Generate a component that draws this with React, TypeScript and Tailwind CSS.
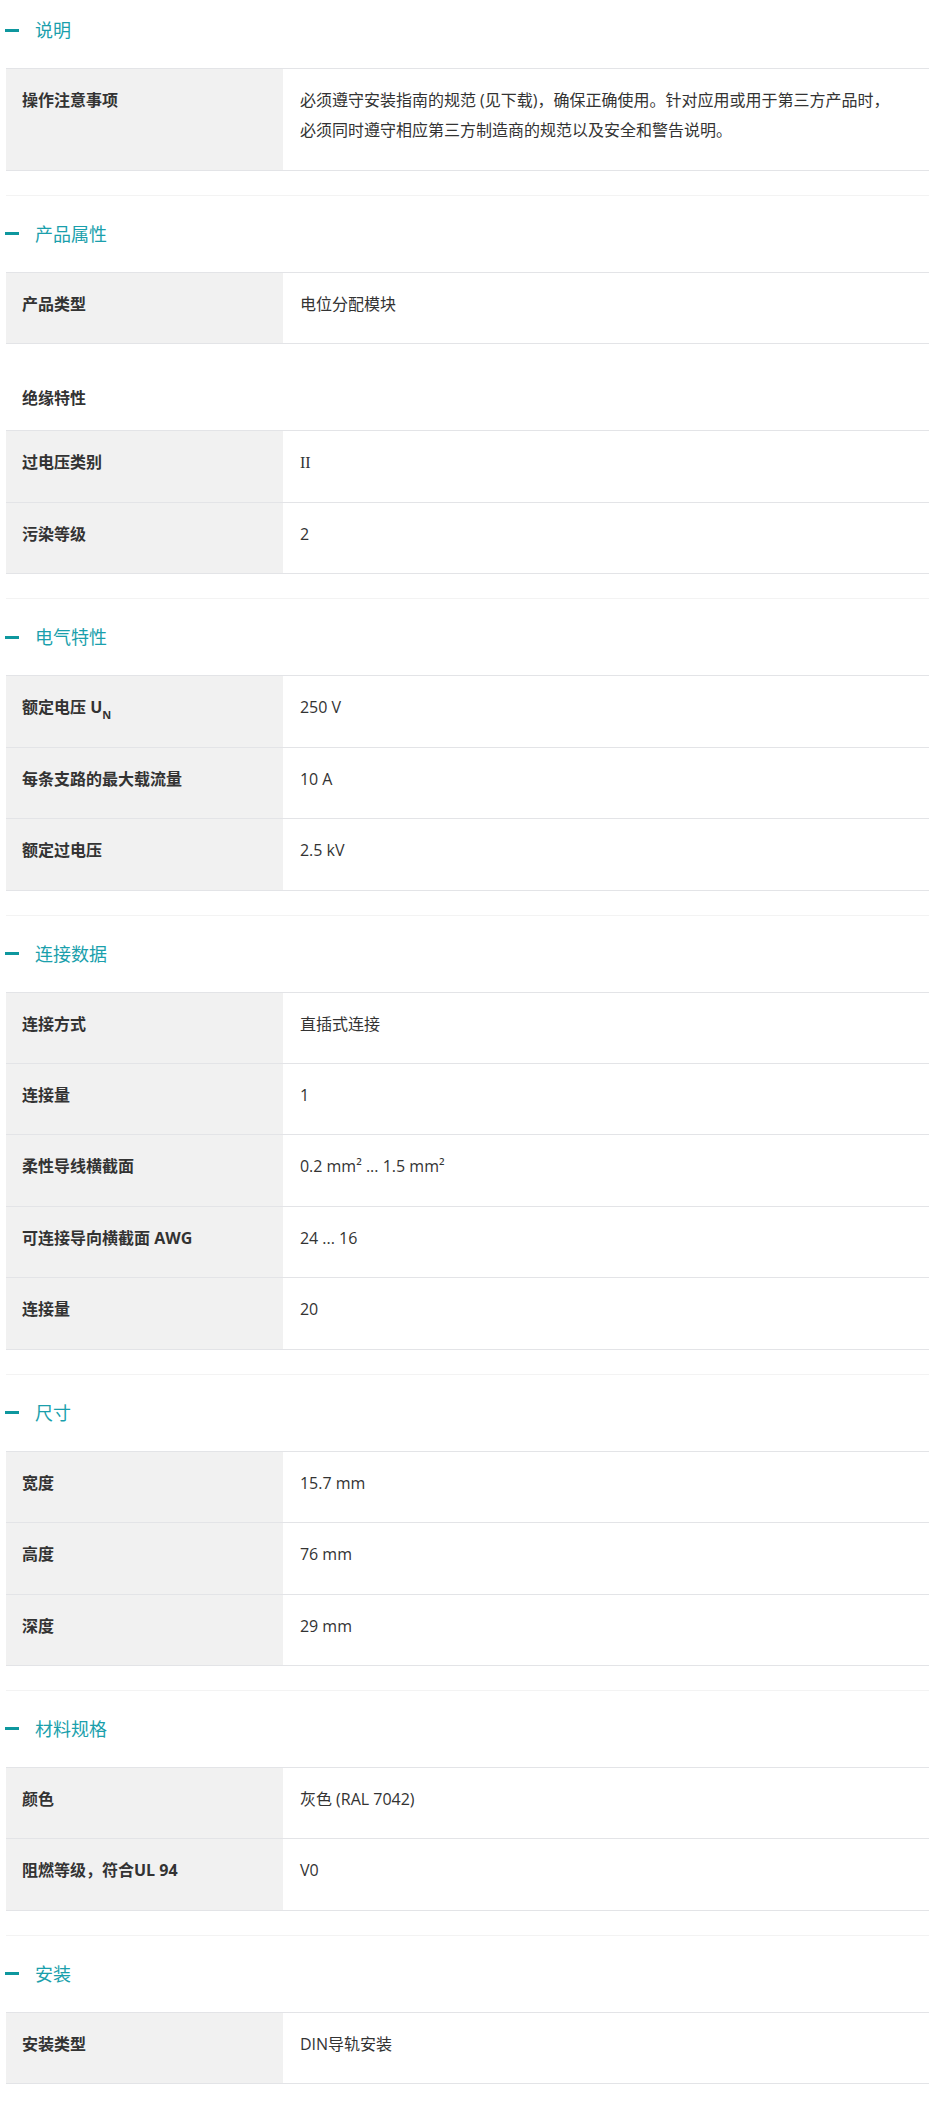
import type { ReactNode } from "react";

type Row = { label: ReactNode; value: ReactNode };
type Block = { sub?: string; rows: Row[] };
type Section = { title: string; blocks: Block[] };

const SECTIONS: Section[] = [
  {
    title: "说明",
    blocks: [
      {
        rows: [
          {
            label: "操作注意事项",
            value: (
              <>
                必须遵守安装指南的规范 (见下载)，确保正确使用。针对应用或用于第三方产品时，
                <br />
                必须同时遵守相应第三方制造商的规范以及安全和警告说明。
              </>
            ),
          },
        ],
      },
    ],
  },
  {
    title: "产品属性",
    blocks: [
      { rows: [{ label: "产品类型", value: "电位分配模块" }] },
      {
        sub: "绝缘特性",
        rows: [
          { label: "过电压类别", value: <span style={{ fontFamily: '"Liberation Serif", serif' }}>II</span> },
          { label: "污染等级", value: "2" },
        ],
      },
    ],
  },
  {
    title: "电气特性",
    blocks: [
      {
        rows: [
          {
            label: (
              <>
                额定电压 U<sub className="text-[11px] align-[-3px]">N</sub>
              </>
            ),
            value: "250 V",
          },
          { label: "每条支路的最大载流量", value: "10 A" },
          { label: "额定过电压", value: "2.5 kV" },
        ],
      },
    ],
  },
  {
    title: "连接数据",
    blocks: [
      {
        rows: [
          { label: "连接方式", value: "直插式连接" },
          { label: "连接量", value: "1" },
          { label: "柔性导线横截面", value: "0.2 mm² ... 1.5 mm²" },
          { label: "可连接导向横截面 AWG", value: "24 ... 16" },
          { label: "连接量", value: "20" },
        ],
      },
    ],
  },
  {
    title: "尺寸",
    blocks: [
      {
        rows: [
          { label: "宽度", value: "15.7 mm" },
          { label: "高度", value: "76 mm" },
          { label: "深度", value: "29 mm" },
        ],
      },
    ],
  },
  {
    title: "材料规格",
    blocks: [
      {
        rows: [
          { label: "颜色", value: "灰色 (RAL 7042)" },
          { label: "阻燃等级，符合UL 94", value: "V0" },
        ],
      },
    ],
  },
  {
    title: "安装",
    blocks: [{ rows: [{ label: "安装类型", value: "DIN导轨安装" }] }],
  },
];

function SpecTable({ rows }: { rows: Row[] }) {
  return (
    <div className="border-t border-[#e3e4e7]">
      {rows.map((r, i) => (
        <div key={i} className="flex border-b border-[#e3e4e7]">
          <div className="w-[30%] shrink-0 bg-[#f1f1f1] px-4 pt-4 pb-6 font-bold text-[#333]">{r.label}</div>
          <div className="flex-1 pl-[17px] pr-4 pt-4 pb-6 text-[#333]">{r.value}</div>
        </div>
      ))}
    </div>
  );
}

export default function App() {
  return (
    <main
      className="min-h-screen bg-white pl-[6px] pr-[5px] text-[16px] leading-[30.4px]"
      style={{ fontFamily: '"Open Sans", "Noto Sans CJK SC", sans-serif' }}
    >
      {SECTIONS.map((s, i) => (
        <section key={s.title} className={i === 0 ? "pt-[18px] pb-6" : "border-t border-[#f3f3f3] pt-[26px] pb-6"}>
          <h2 className="mb-[26px] -ml-px flex items-center gap-4 text-[18px] leading-6 font-normal text-[#1a9fac]">
            <span className="h-[3px] w-[14px] bg-[#0e979e]" />
            {s.title}
          </h2>
          {s.blocks.map((b, j) => (
            <div key={j}>
              {b.sub && <div className="px-4 pt-[39px] pb-4 font-bold text-[#333]">{b.sub}</div>}
              <SpecTable rows={b.rows} />
            </div>
          ))}
        </section>
      ))}
    </main>
  );
}
